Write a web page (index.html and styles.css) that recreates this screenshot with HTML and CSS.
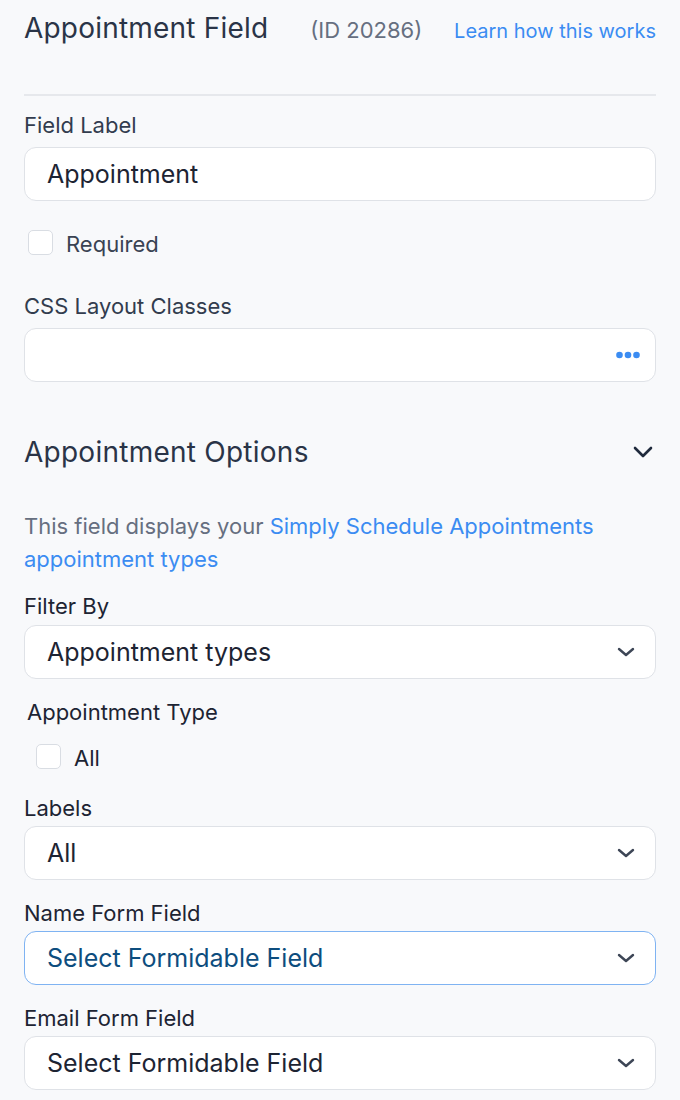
FILE: index.html
```html
<!DOCTYPE html>
<html lang="en">
<head>
    <meta charset="UTF-8">
    <meta name="viewport" content="width=device-width, initial-scale=1.0">
    <title>Appointment Field</title>
    <link rel="stylesheet" href="styles.css">
</head>
<body>
    <main class="panel">
        <!-- Field header -->
        <header class="field-head">
            <h1>Appointment Field</h1>
            <span class="field-id">(ID 20286)</span>
            <a class="learn" href="#">Learn how this works</a>
        </header>

        <div class="group group-first">
            <label class="label label-soft" for="fieldLabel">Field Label</label>
            <div class="box">
                <input class="box-input" type="text" id="fieldLabel" value="Appointment">
            </div>
        </div>

        <label class="check check-required">
            <span class="check-box"></span>
            <span class="check-text">Required</span>
        </label>

        <div class="group group-css">
            <label class="label label-soft" for="cssClasses">CSS Layout Classes</label>
            <div class="box">
                <input class="box-input" type="text" id="cssClasses">
                <svg class="dots" width="24" height="8" viewBox="0 0 24 8">
                    <circle cx="3.5" cy="4" r="3.3" fill="#3b8cf2"/>
                    <circle cx="12" cy="4" r="3.3" fill="#3b8cf2"/>
                    <circle cx="20.5" cy="4" r="3.3" fill="#3b8cf2"/>
                </svg>
            </div>
        </div>

        <!-- Appointment options -->
        <section class="options">
            <div class="section-head">
                <h2>Appointment Options</h2>
                <svg width="20" height="12" viewBox="0 0 20 12">
                    <path d="M2 2l8 8 8-8" fill="none" stroke="#1f2a3c" stroke-width="2.6" stroke-linecap="round" stroke-linejoin="round"/>
                </svg>
            </div>

            <p class="intro">This field displays your <a href="#">Simply Schedule Appointments appointment types</a></p>

            <div class="group group-filter">
                <span class="label">Filter By</span>
                <div class="box select">
                    <span class="value">Appointment types</span>
                    <svg class="chev" width="18" height="10" viewBox="0 0 18 10"><path d="M2 2l7 6 7-6" fill="none" stroke="#3d4656" stroke-width="2.4" stroke-linecap="round" stroke-linejoin="round"/></svg>
                </div>
            </div>

            <span class="label sub-label">Appointment Type</span>
            <label class="check check-all">
                <span class="check-box"></span>
                <span class="check-text">All</span>
            </label>

            <div class="group group-labels">
                <span class="label">Labels</span>
                <div class="box select">
                    <span class="value">All</span>
                    <svg class="chev" width="18" height="10" viewBox="0 0 18 10"><path d="M2 2l7 6 7-6" fill="none" stroke="#3d4656" stroke-width="2.4" stroke-linecap="round" stroke-linejoin="round"/></svg>
                </div>
            </div>

            <div class="group group-next">
                <span class="label">Name Form Field</span>
                <div class="box select focused">
                    <span class="value">Select Formidable Field</span>
                    <svg class="chev" width="18" height="10" viewBox="0 0 18 10"><path d="M2 2l7 6 7-6" fill="none" stroke="#3d4656" stroke-width="2.4" stroke-linecap="round" stroke-linejoin="round"/></svg>
                </div>
            </div>

            <div class="group group-next">
                <span class="label">Email Form Field</span>
                <div class="box select">
                    <span class="value">Select Formidable Field</span>
                    <svg class="chev" width="18" height="10" viewBox="0 0 18 10"><path d="M2 2l7 6 7-6" fill="none" stroke="#3d4656" stroke-width="2.4" stroke-linecap="round" stroke-linejoin="round"/></svg>
                </div>
            </div>
        </section>
    </main>
</body>
</html>
```

FILE: styles.css
```css
body {
    margin: 0;
    background-color: #f8f9fb;
    font-family: Inter, "Noto Sans", sans-serif;
    color: #1d2433;
}
.panel {
    padding: 0 24px;
}
.field-head {
    display: flex;
    align-items: baseline;
    height: 96px;
    padding-top: 11px;
    box-sizing: border-box;
    border-bottom: 2px solid #e6e8ec;
}
.field-head h1 {
    margin: 0;
    font-size: 28px;
    font-weight: 400;
    line-height: 34px;
    letter-spacing: 0.2px;
    color: #2a3447;
}
.field-id {
    margin-left: 42px;
    font-size: 22px;
    color: #666f80;
}
.learn {
    margin-left: auto;
    font-size: 20px;
    color: #3b8cf2;
    text-decoration: none;
}
.label {
    display: block;
    font-size: 22px;
    line-height: 26px;
    color: #1d2433;
}
.label-soft {
    color: #323c4e;
}
.box {
    display: flex;
    align-items: center;
    height: 54px;
    box-sizing: border-box;
    padding: 0 15px 0 22px;
    background: #fff;
    border: 1px solid #dfe2e7;
    border-radius: 12px;
}
.box-input {
    flex: 1;
    min-width: 0;
    border: none;
    outline: none;
    padding: 0;
    background: transparent;
    font-family: inherit;
    font-size: 25px;
    color: #1d2433;
}
.group-first {
    margin-top: 16px;
}
.group-first .label,
.group-css .label {
    margin-bottom: 9px;
}
.check {
    display: flex;
    align-items: center;
    height: 26px;
    font-size: 22px;
    color: #3a4353;
}
.check-box {
    width: 25px;
    height: 25px;
    box-sizing: border-box;
    border: 1px solid #d9dde3;
    border-radius: 5px;
    background: #fff;
    margin-right: 13px;
}
.check-text {
    padding-top: 3px;
}
.check-required {
    margin-top: 28px;
    padding-left: 4px;
}
.group-css {
    margin-top: 38px;
}
.section-head {
    display: flex;
    align-items: center;
    justify-content: space-between;
    margin-top: 53px;
    padding-right: 3px;
}
.section-head h2 {
    margin: 0;
    font-size: 28px;
    font-weight: 400;
    line-height: 34px;
    letter-spacing: 0.25px;
    color: #2a3447;
}
.intro {
    margin: 41px 0 0;
    font-size: 22px;
    line-height: 33px;
    color: #666f80;
}
.intro a {
    color: #3b8cf2;
    text-decoration: none;
}
.group-filter {
    margin-top: 17px;
}
.group-filter .label {
    margin-bottom: 6px;
}
.select {
    justify-content: space-between;
    padding-right: 20px;
}
.value {
    font-size: 25px;
    color: #1d2433;
}
.sub-label {
    margin-top: 20px;
    padding-left: 3px;
}
.check-all {
    margin-top: 18px;
    padding-left: 12px;
    color: #1d2433;
}
.group-labels {
    margin-top: 26px;
}
.group-labels .label,
.group-next .label {
    margin-bottom: 5px;
}
.group-next {
    margin-top: 20px;
}
.focused {
    border-color: #7fb3f2;
}
.focused .value {
    color: #0d4d7e;
}
```
